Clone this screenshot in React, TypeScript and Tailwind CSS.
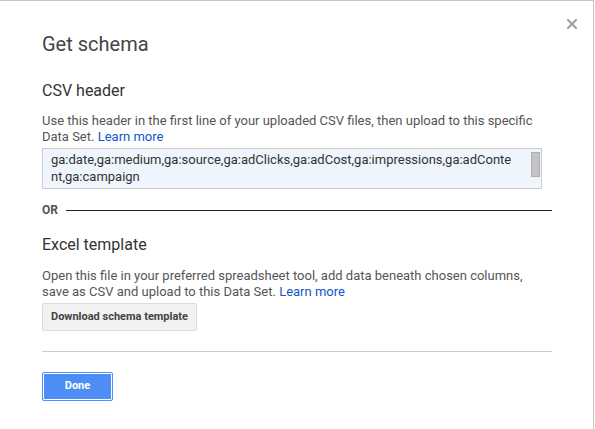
const headerFields =
  "ga:date,ga:medium,ga:source,ga:adClicks,ga:adCost,ga:impressions,ga:adContent,ga:campaign";

function CloseIcon() {
  return (
    <svg width="10" height="10" viewBox="0 0 10 10" className="block">
      <path d="M1 1 L9 9 M9 1 L1 9" stroke="#9e9e9e" strokeWidth="2" strokeLinecap="square" />
    </svg>
  );
}

export default function App() {
  return (
    <div className="w-[595px] h-[429px] bg-white font-['Roboto','Liberation_Sans',sans-serif]">
      <div className="relative w-[594px] h-[429px] border-t border-r border-[#c6c6c6] pl-[42px] pt-[31px]">
        {/* close */}
        <button className="absolute right-[16px] top-[18px] p-0">
          <CloseIcon />
        </button>

        <div className="w-[510px]">
          <h1 className="text-[20px] leading-[24px] text-[#444]">Get schema</h1>

          {/* CSV header */}
          <h2 className="mt-[25px] text-[16px] leading-[20px] text-[#333]">CSV header</h2>
          <p className="mt-[12px] text-[13px] leading-[16px] text-[#555]">
            Use this header in the first line of your uploaded CSV files, then upload to this specific
            Data Set. <a href="#" className="text-[#15c]">Learn more</a>
          </p>
          <div className="relative mt-[3px] w-[500px] h-[41px] border border-[#ccc] bg-[#eef5fc] overflow-hidden">
            <div className="w-[470px] pl-[8px] pt-[2px] text-[13px] leading-[17px] text-[#333] break-all">
              {headerFields}
            </div>
            <div className="absolute right-[1px] top-[3px] w-[9px] h-[25px] bg-[#c3c3c3] border border-[#b0b0b0]" />
          </div>

          {/* divider */}
          <div className="mt-[13px] flex items-center gap-[8px]">
            <span className="text-[12px] leading-[16px] font-bold text-[#555]">OR</span>
            <div className="flex-1 h-px bg-[#222]" />
          </div>

          {/* Excel template */}
          <h2 className="mt-[17px] text-[16px] leading-[20px] text-[#333]">Excel template</h2>
          <p className="mt-[13px] text-[13px] leading-[16px] text-[#555]">
            Open this file in your preferred spreadsheet tool, add data beneath chosen columns,
            save as CSV and upload to this Data Set. <a href="#" className="text-[#15c]">Learn more</a>
          </p>
          <button className="mt-[3px] h-[28px] px-[8px] rounded-[2px] border border-[#dcdcdc] bg-[#f1f1f1] text-[11px] font-bold text-[#444]">
            Download schema template
          </button>

          <div className="mt-[20px] h-px bg-[#ccc]" />

          <button className="mt-[20px] w-[71px] h-[29px] rounded-[2px] border border-[#4d90fe] bg-[#4d8df5] shadow-[inset_0_0_0_1px_#fff] text-[11px] font-bold text-white">
            Done
          </button>
        </div>
      </div>
    </div>
  );
}
